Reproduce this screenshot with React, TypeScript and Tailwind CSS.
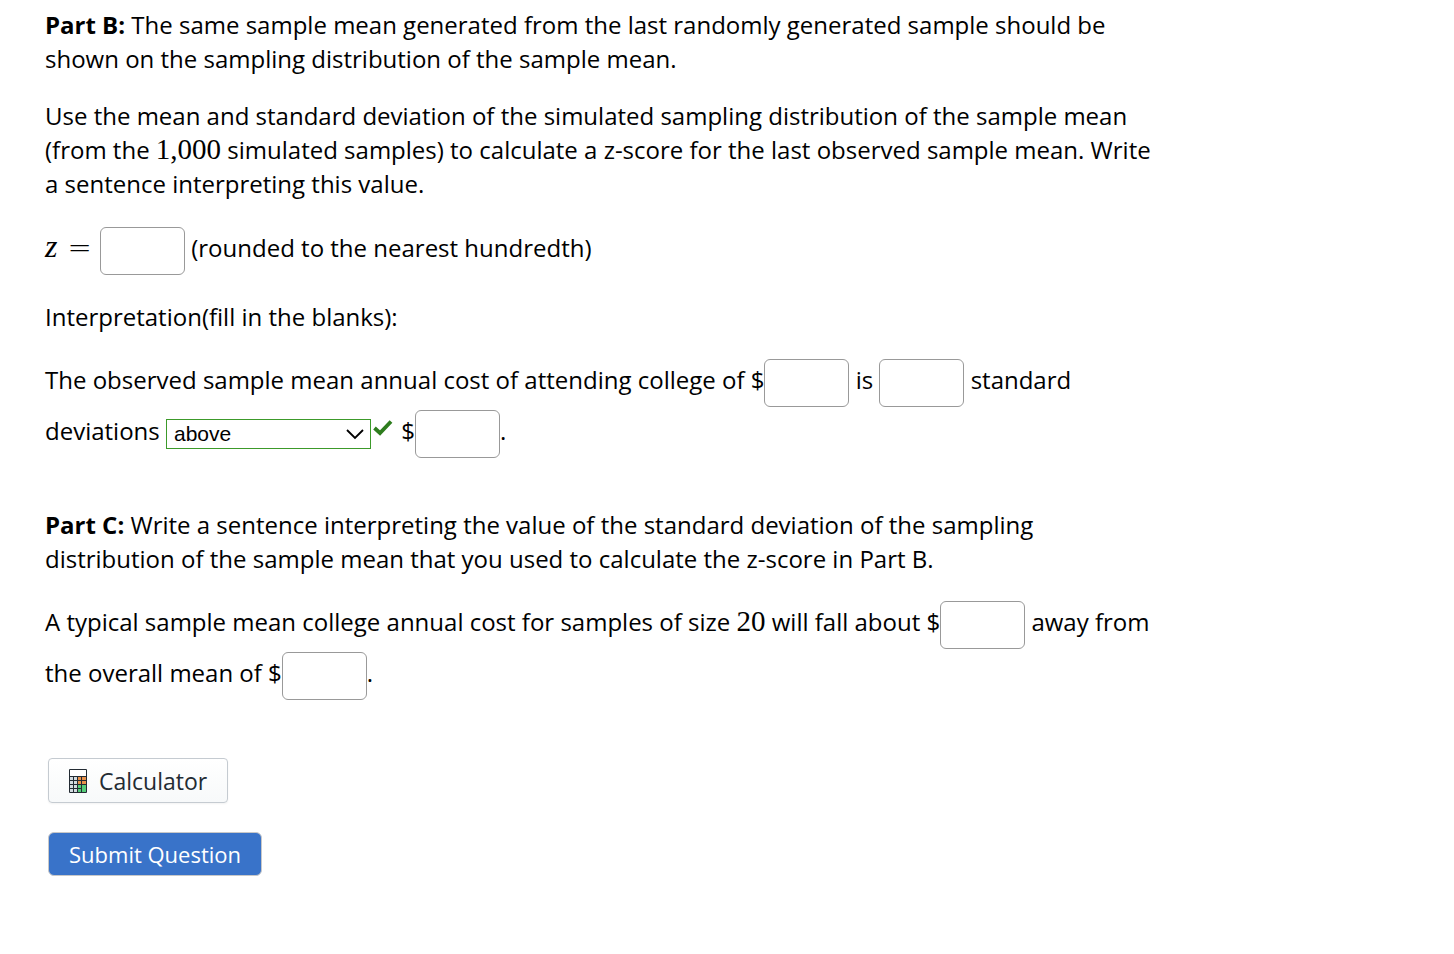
import type { ReactNode } from "react";

function Blank({ label }: { label: string }) {
  return (
    <input
      type="text"
      aria-label={label}
      className="mt-0.5 mb-px inline-block h-12 w-[85px] rounded-md border border-[#999] bg-white px-2 align-middle"
    />
  );
}

function MathText({ children }: { children: ReactNode }) {
  return <span className="font-['Liberation_Serif',serif] text-[29px] leading-none">{children}</span>;
}

function DirectionSelect() {
  return (
    <span className="relative inline-block align-middle leading-none">
      <select
        aria-label="Direction"
        defaultValue="above"
        className="h-[30px] w-[205px] appearance-none border border-[#3c9a2a] bg-white px-[7px] font-['Liberation_Sans',sans-serif] text-[21px] leading-6"
      >
        <option>above</option>
        <option>below</option>
      </select>
      <svg
        viewBox="0 0 18 12"
        aria-hidden="true"
        className="pointer-events-none absolute top-2.5 right-[7px] h-3 w-[18px]"
        fill="none"
        stroke="black"
        strokeWidth="1.8"
      >
        <path d="M1 1 9 9 17 1" />
      </svg>
    </span>
  );
}

function CheckMark() {
  return (
    <svg viewBox="0 0 20 16" role="img" aria-label="Correct" className="mx-0.5 mb-1 inline-block h-4 w-5 align-baseline">
      <path d="M1.5 8 7 13 18 1.5" fill="none" stroke="#2e7d1e" strokeWidth="3.8" />
    </svg>
  );
}

function CalculatorIcon() {
  return (
    <svg viewBox="0 0 18 24" aria-hidden="true" className="h-6 w-[18px]">
      <rect width="18" height="24" rx="1" fill="#232b33" />
      <rect x="1" y="1" width="16" height="6" fill="#fff" />
      {[8, 12, 16, 20].map((y, row) =>
        [1, 5, 9, 13].map((x, col) => (
          <rect
            key={`${x}-${y}`}
            x={x}
            y={y}
            width={col === 3 ? 4 : 3}
            height={row === 2 && col === 3 ? 7 : 3}
            fill={col < 2 ? "#d3dbe0" : row < 2 ? "#e8914a" : "#55cc77"}
          />
        )),
      )}
    </svg>
  );
}

export default function App() {
  return (
    <main className="min-h-screen bg-white px-[45px] pt-2 font-['Open_Sans',sans-serif] text-2xl leading-[34px] text-black">
      <div className="max-w-[1110px]">
        <p>
          <strong>Part B:</strong> The same sample mean generated from the last randomly generated sample should be
          shown on the sampling distribution of the sample mean.
        </p>
        <p className="mt-[23px]">
          Use the mean and standard deviation of the simulated sampling distribution of the sample mean (from the{" "}
          <MathText>1,000</MathText> simulated samples) to calculate a z-score for the last observed sample mean. Write
          a sentence interpreting this value.
        </p>
        <p className="mt-6">
          <i className="font-['Liberation_Serif',serif] text-[32px] leading-none">z</i>
          <span className="mr-0.5 ml-2.5 font-['DejaVu_Sans_Light','DejaVu_Sans',sans-serif] text-[29px] leading-none font-extralight">
            =
          </span>{" "}
          <Blank label="z-score" /> (rounded to the nearest hundredth)
        </p>
        <p className="mt-6">Interpretation(fill in the blanks):</p>
        <p className="mt-[23px]">
          The observed sample mean annual cost of attending college of $<Blank label="Observed sample mean" /> is{" "}
          <Blank label="Number of standard deviations" /> standard deviations <DirectionSelect />
          <CheckMark /> $<Blank label="Mean of the sampling distribution" />.
        </p>
        <p className="mt-[49px]">
          <strong>Part C:</strong> Write a sentence interpreting the value of the standard deviation of the sampling
          distribution of the sample mean that you used to calculate the z-score in Part B.
        </p>
        <p className="mt-[23px]">
          A typical sample mean college annual cost for samples of size <MathText>20</MathText> will fall about $
          <Blank label="Typical distance" /> away from the overall mean of $<Blank label="Overall mean" />.
        </p>
      </div>
      <div className="mt-[57px] ml-[3px] flex flex-col items-start gap-[29px]">
        <button
          type="button"
          className="flex h-[45px] items-center gap-3 rounded-sm border border-[#c5cbd1] bg-linear-to-b from-white to-[#f7f9fa] px-5 text-[23px] text-[#232b33] shadow-xs"
        >
          <CalculatorIcon />
          Calculator
        </button>
        <button
          type="submit"
          className="h-11 rounded-md border border-[#c8c8c8] bg-[#3973c9] px-5 text-[22px] text-white"
        >
          Submit Question
        </button>
      </div>
    </main>
  );
}
